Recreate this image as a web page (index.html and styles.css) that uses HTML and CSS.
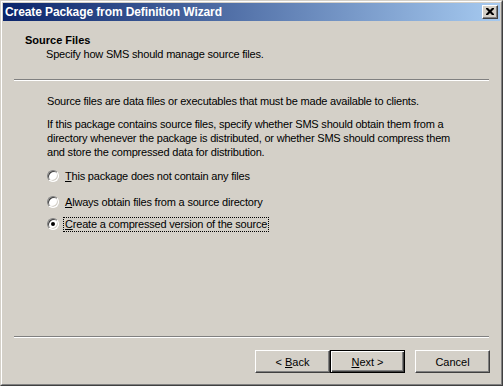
FILE: index.html
```html
<!DOCTYPE html>
<html>
<head>
<meta charset="utf-8">
<link rel="stylesheet" href="styles.css">
</head>
<body>
<div class="window">
  <div class="frame">
    <div class="titlebar">
      <span class="title">Create Package from Definition Wizard</span>
      <span class="close"><svg width="8" height="7" viewBox="0 0 8 7"><path d="M0 0h2l2 2 2-2h2v1l-2.5 2.5L8 6v1H6L4 5 2 7H0V6l2.5-2.5L0 1z" fill="#000"/></svg></span>
    </div>
    <div class="content">
      <div class="header">
        <div class="h-title">Source Files</div>
        <div class="h-sub">Specify how SMS should manage source files.</div>
      </div>
      <div class="sep top-sep"></div>
      <div class="body">
        <p class="p1">Source files are data files or executables that must be made available to clients.</p>
        <p class="p2">If this package contains source files, specify whether SMS should obtain them from a directory whenever the package is distributed, or whether SMS should compress them and store the compressed data for distribution.</p>
        <div class="radios">
          <label class="radio r1"><span class="dot"></span><span class="lbl"><u>T</u>his package does not contain any files</span></label>
          <label class="radio r2"><span class="dot"></span><span class="lbl"><u>A</u>lways obtain files from a source directory</span></label>
          <label class="radio r3"><span class="dot checked"></span><span class="lbl focus"><u>C</u>reate a compressed version of the source</span></label>
        </div>
      </div>
      <div class="sep bottom-sep"></div>
      <div class="footer">
        <button class="btn">&lt; <u>B</u>ack</button>
        <button class="btn default"><u>N</u>ext &gt;</button>
        <button class="btn cancel">Cancel</button>
      </div>
    </div>
  </div>
</div>
</body>
</html>
```
FILE: styles.css
```css
html, body {
  margin: 0;
  padding: 0;
  background: #d4d0c8;
}
body {
  font-family: "Liberation Sans", Arial, sans-serif;
  font-size: 11px;
  color: #000;
}
.window {
  width: 503px;
  height: 386px;
  box-sizing: border-box;
  border: 1px solid;
  border-color: #d4d0c8 #404040 #404040 #d4d0c8;
  background: #d4d0c8;
}
.frame {
  height: 100%;
  box-sizing: border-box;
  border: 1px solid;
  border-color: #ffffff #808080 #808080 #ffffff;
  padding: 1px;
  display: flex;
  flex-direction: column;
}
.titlebar {
  height: 18px;
  flex: none;
  background: linear-gradient(to right, #0a246a, #a6caf0);
  display: flex;
  align-items: center;
  justify-content: space-between;
  padding: 0 2px 0 2px;
}
.title {
  color: #fff;
  font-weight: bold;
  font-size: 12px;
  font-family: "Liberation Sans", Arial, sans-serif;
  letter-spacing: -0.1px;
}
.close {
  width: 16px;
  height: 14px;
  box-sizing: border-box;
  background: #d4d0c8;
  border: 1px solid;
  border-color: #fff #404040 #404040 #fff;
  box-shadow: inset -1px -1px #808080;
  display: flex;
  align-items: center;
  justify-content: center;
  padding: 0 1px 1px 0;
}
.close svg { display: block; }
.content {
  flex: 1;
  display: flex;
  flex-direction: column;
}
.header {
  padding: 12px 0 0 22px;
  line-height: 14px;
}
.h-title { font-weight: bold; }
.h-sub { padding-left: 21px; letter-spacing: -0.2px; }
.sep {
  border-top: 1px solid #808080;
  border-bottom: 1px solid #ffffff;
  height: 0;
  margin: 0 11px;
}
.top-sep { margin-top: 18px; }
.body {
  flex: 1;
  padding: 13px 0 0 44px;
  line-height: 14px;
  letter-spacing: -0.2px;
}
.body p { margin: 0; }
.p2 { margin-top: 9px !important; width: 420px; }
.radios {
  display: flex;
  flex-direction: column;
  margin-top: 9px;
}
.radio {
  display: flex;
  align-items: center;
  height: 16px;
}
.r2 { margin-top: 10px; }
.r3 { margin-top: 6px; }
.dot {
  width: 12px;
  height: 12px;
  box-sizing: border-box;
  border-radius: 50%;
  border: 1px solid;
  border-color: #808080 #ffffff #ffffff #808080;
  box-shadow: inset 1px 1px #404040, inset -1px -1px #d4d0c8;
  background: #fff;
  position: relative;
  margin-right: 5px;
  flex: none;
}
.dot.checked::after {
  content: "";
  position: absolute;
  left: 3px;
  top: 3px;
  width: 4px;
  height: 4px;
  border-radius: 50%;
  background: #000;
}
.lbl { padding: 0 1px; line-height: 13px; border: 1px solid transparent; margin-left: -1px; }
.lbl.focus { border: 1px dotted #000; }
.footer {
  display: flex;
  justify-content: flex-end;
  padding: 12px 10px 10px 0;
}
.btn {
  width: 75px;
  height: 23px;
  box-sizing: border-box;
  font: inherit;
  font-size: 11px;
  color: #000;
  background: #d4d0c8;
  border: 1px solid;
  border-color: #ffffff #404040 #404040 #ffffff;
  box-shadow: inset -1px -1px #808080;
  padding: 0;
  margin: 0;
}
.btn.default {
  border: 1px solid #000;
  box-shadow: inset 1px 1px #fff, inset -1px -1px #404040, inset -2px -2px #808080;
}
.btn.cancel { margin-left: 10px; }
```
